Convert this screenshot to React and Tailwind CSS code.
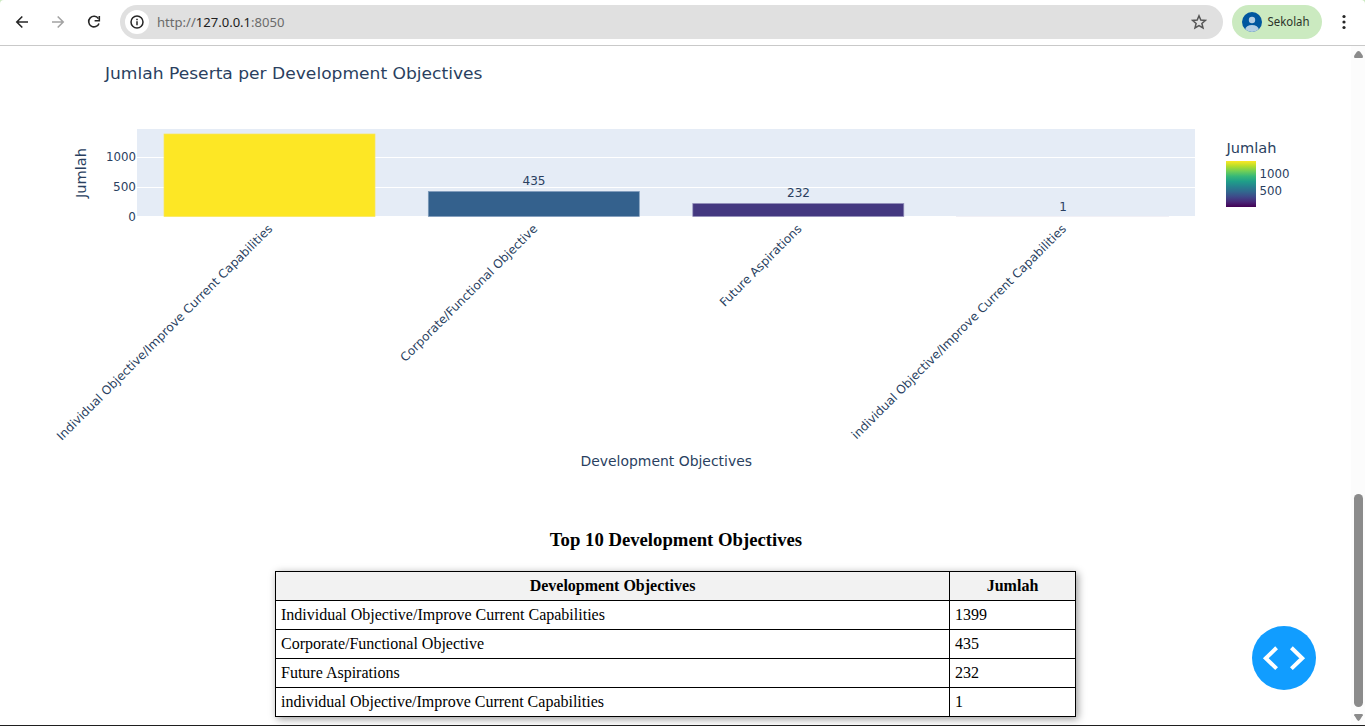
import React from "react";

const bars = [
  { x: 164, y: 134, h: 82.5, fill: "#fde725", edge: "#f8e65c" },
  { x: 428.3, y: 191.5, h: 25, fill: "#34618d", edge: "#7e9bbb" },
  { x: 692.8, y: 203.5, h: 13, fill: "#443880", edge: "#938fba" },
];

const values = [
  { x: 534, y: 185, label: "435", w: 23 },
  { x: 798.5, y: 197, label: "232", w: 23 },
  { x: 1063, y: 211, label: "1", w: 7.6 },
];

const ticks = [
  { x: 273.2, label: "Individual Objective/Improve Current Capabilities", w: 299 },
  { x: 538.2, label: "Corporate/Functional Objective", w: 188 },
  { x: 802.4, label: "Future Aspirations", w: 110 },
  { x: 1066.9, label: "individual Objective/Improve Current Capabilities", w: 297.5 },
];

const rows = [
  ["Individual Objective/Improve Current Capabilities", "1399"],
  ["Corporate/Functional Objective", "435"],
  ["Future Aspirations", "232"],
  ["individual Objective/Improve Current Capabilities", "1"],
];

function Toolbar() {
  return (
    <header className="flex h-[46px] shrink-0 items-start border-b border-[#c9c9c9] bg-white pt-[5px] font-['Noto_Sans',sans-serif]">
      <div className="flex h-[34px] w-[120px] items-center text-[#1f1f1f]">
        <svg width="120" height="34" viewBox="0 5 120 34" fill="none" strokeWidth="1.6">
          <path d="M28 22H17M22.3 16.5L16.8 22l5.5 5.5" stroke="#262626" />
          <path d="M52 22h11M57.7 16.5l5.5 5.5-5.5 5.5" stroke="#a3a3a3" />
          <path d="M98.4 18.6A5.3 5.3 0 1 0 99 23.4" stroke="#262626" />
          <path d="M99.3 16v4.7h-4.7" stroke="#262626" />
        </svg>
      </div>
      <div className="flex h-[34px] w-[1103px] items-center rounded-full bg-[#e0e0e0] pl-[5px] pr-[16px]">
        <div className="flex size-6 items-center justify-center rounded-full bg-white">
          <svg width="14" height="14" viewBox="0 0 14 14" fill="none" stroke="#262626" strokeWidth="1.5">
            <circle cx="7" cy="7" r="6" />
            <path d="M7 6.2V10.2M7 3.7V5.2" />
          </svg>
        </div>
        <svg className="ml-[8px]" width="140" height="24" fontSize="13" fill="#6b6b6b">
          <text x="0" y="16.5" textLength="127.5" lengthAdjust="spacingAndGlyphs">
            http://<tspan fill="#202020">127.0.0.1</tspan>:8050
          </text>
        </svg>
        <svg className="ml-auto" width="16" height="16" viewBox="0 0 16 16" fill="none" stroke="#555" strokeWidth="1.5">
          <path d="M8 1.8l1.8 4.2 4.6.4-3.5 3 1.1 4.5L8 11.5l-4 2.4 1.1-4.5-3.5-3 4.6-.4z" />
        </svg>
      </div>
      <div className="ml-[9px] flex h-[34px] w-[90px] items-center rounded-full bg-[#cbeac0] pl-[10px]">
        <svg width="20" height="20" viewBox="0 0 20 20">
          <defs>
            <clipPath id="avatar"><circle cx="10" cy="10" r="10" /></clipPath>
          </defs>
          <g clipPath="url(#avatar)">
            <rect width="20" height="20" fill="#00579f" />
            <circle cx="10" cy="8" r="3.2" fill="#b3cde2" />
            <ellipse cx="10" cy="17.3" rx="6.7" ry="4.4" fill="#b3cde2" />
          </g>
        </svg>
        <svg className="ml-[5px]" width="50" height="24" fill="#2b332a" fontSize="12">
          <text x="0.5" y="16" textLength="42" lengthAdjust="spacingAndGlyphs">Sekolah</text>
        </svg>
      </div>
      <svg className="ml-[16px]" width="12" height="34" fill="#262626">
        <circle cx="6" cy="11.5" r="1.6" />
        <circle cx="6" cy="17" r="1.6" />
        <circle cx="6" cy="22.5" r="1.6" />
      </svg>
    </header>
  );
}

function Chart() {
  return (
    <svg
      className="block shrink-0 font-['DejaVu_Sans',Verdana,sans-serif]"
      width="1351"
      height="450"
      viewBox="0 46 1351 450"
      fill="#2a3f5f"
      fontSize="12"
    >
      <defs>
        <linearGradient id="viridis" x1="0" y1="1" x2="0" y2="0">
          <stop offset="0" stopColor="#440154" />
          <stop offset="0.111" stopColor="#482878" />
          <stop offset="0.222" stopColor="#3e4989" />
          <stop offset="0.333" stopColor="#31688e" />
          <stop offset="0.444" stopColor="#26828e" />
          <stop offset="0.556" stopColor="#1f9e89" />
          <stop offset="0.667" stopColor="#35b779" />
          <stop offset="0.778" stopColor="#6ece58" />
          <stop offset="0.889" stopColor="#b5de2b" />
          <stop offset="1" stopColor="#fde725" />
        </linearGradient>
      </defs>
      <text x="105" y="79" fontSize="16.5" textLength="377.5" lengthAdjust="spacingAndGlyphs">
        Jumlah Peserta per Development Objectives
      </text>
      <rect x="137" y="129" width="1058" height="87" fill="#e5ecf6" />
      <path d="M137 157.5H1195M137 187.5H1195" stroke="#fff" />
      <path d="M956 216.5H1169" stroke="#f1f0f6" />
      {bars.map((b) => (
        <rect key={b.x} x={b.x} y={b.y} width="211" height={b.h} fill={b.fill} stroke={b.edge} strokeWidth="0.7" />
      ))}
      <text x="106" y="161" textLength="30" lengthAdjust="spacingAndGlyphs">1000</text>
      <text x="113" y="191" textLength="23" lengthAdjust="spacingAndGlyphs">500</text>
      <text x="128.3" y="221">0</text>
      <text transform="translate(86 198) rotate(-90)" fontSize="13.5" textLength="50" lengthAdjust="spacingAndGlyphs">Jumlah</text>
      {values.map((v) => (
        <text key={v.label} x={v.x} y={v.y} textAnchor="middle" textLength={v.w} lengthAdjust="spacingAndGlyphs">
          {v.label}
        </text>
      ))}
      {ticks.map((t) => (
        <text
          key={t.x}
          transform={`translate(${t.x} 229.5) rotate(-45)`}
          textAnchor="end"
          textLength={t.w}
          lengthAdjust="spacingAndGlyphs"
        >
          {t.label}
        </text>
      ))}
      <text x="580.5" y="466" fontSize="13.7" textLength="171.5" lengthAdjust="spacingAndGlyphs">Development Objectives</text>
      <text x="1226.5" y="153" fontSize="13.5" textLength="50" lengthAdjust="spacingAndGlyphs">Jumlah</text>
      <rect x="1226" y="161" width="30" height="46" fill="url(#viridis)" />
      <text x="1259.5" y="178" textLength="30" lengthAdjust="spacingAndGlyphs">1000</text>
      <text x="1259.5" y="195" textLength="22.5" lengthAdjust="spacingAndGlyphs">500</text>
    </svg>
  );
}

function TopTable() {
  return (
    <section className="flex flex-col items-center pt-[33px] font-['Liberation_Serif','Times_New_Roman',serif] text-black">
      <h3 className="pl-px text-[18.72px] font-bold leading-[22px]">Top 10 Development Objectives</h3>
      <table className="mt-[20px] w-[800px] table-fixed border-collapse text-[16px] leading-[18px] shadow-[2px_2px_8px_rgba(0,0,0,0.4)]">
        <colgroup>
          <col className="w-[674px]" />
          <col className="w-[126px]" />
        </colgroup>
        <thead>
          <tr className="h-[29px] bg-[#f2f2f2]">
            <th className="border border-black p-[5px] font-bold">Development Objectives</th>
            <th className="border border-black p-[5px] font-bold">Jumlah</th>
          </tr>
        </thead>
        <tbody>
          {rows.map(([name, count]) => (
            <tr key={name} className="h-[29px] bg-white">
              <td className="border border-black p-[5px]">{name}</td>
              <td className="border border-black p-[5px]">{count}</td>
            </tr>
          ))}
        </tbody>
      </table>
    </section>
  );
}

export default function App() {
  return (
    <div className="relative flex h-[726px] w-[1365px] flex-col overflow-hidden bg-white">
      <Toolbar />
      <div className="flex h-[679px] overflow-hidden">
        <main className="w-[1351px]">
          <Chart />
          <TopTable />
        </main>
        <div className="flex w-[14px] flex-col items-end bg-[#fcfcfc] pr-[2px]">
          <svg className="mt-[4px]" width="9" height="9" fill="#8b8b8b">
            <path d="M4.5 1Q5.5 1 6.3 2L8.7 5.5Q9.4 8 8 8H1Q-.4 8 .3 5.5L2.7 2Q3.5 1 4.5 1Z" />
          </svg>
          <div className="mt-[435px] h-[213px] w-[9px] rounded-full bg-[#8b8b8b]" />
          <svg className="mt-[7px]" width="9" height="8" fill="#8b8b8b">
            <path d="M1 0H8Q9 0 8.8 1.2L6 5.8Q4.5 8 3 5.8L.2 1.2Q0 0 1 0Z" />
          </svg>
        </div>
      </div>
      <div className="h-px shrink-0 bg-[#1f1f1f]" />
      <button className="absolute left-[1252px] top-[626px] flex size-16 items-center justify-center rounded-full bg-[#119dff]">
        <svg width="64" height="64" viewBox="0 0 64 64" fill="none" stroke="#fff" strokeWidth="4">
          <path d="M24.6 21.8L13.8 32.2l10.8 10.4M39.4 21.8l10.8 10.4-10.8 10.4" />
        </svg>
      </button>
      <svg className="absolute left-0 top-0" width="5" height="5" fill="#cbeac0">
        <path d="M0 0H4Q0 0 0 4Z" />
      </svg>
      <svg className="absolute right-0 top-0" width="5" height="5" fill="#cbeac0">
        <path d="M5 0H1Q5 0 5 4Z" />
      </svg>
    </div>
  );
}
